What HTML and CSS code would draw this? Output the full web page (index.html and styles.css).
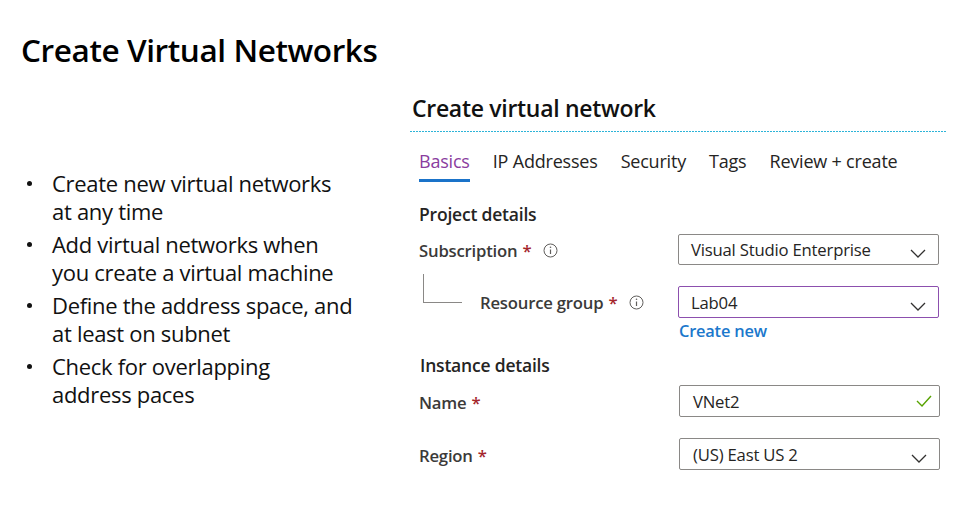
FILE: index.html
```html
<!DOCTYPE html>
<html>
<head>
<meta charset="utf-8">
<link rel="stylesheet" href="styles.css">
</head>
<body>
<div class="slide">
  <h1 class="title">Create Virtual Networks</h1>
  <div class="content">
    <ul class="bullets">
      <li>Create new virtual networks<br>at any time</li>
      <li>Add virtual networks when<br>you create a virtual machine</li>
      <li>Define the address space, and<br>at least on subnet</li>
      <li>Check for overlapping<br>address paces</li>
    </ul>
    <div class="panel">
      <h2 class="panel-title">Create virtual network</h2>
      <div class="tabs">
        <span class="tab active">Basics</span>
        <span class="tab">IP Addresses</span>
        <span class="tab">Security</span>
        <span class="tab">Tags</span>
        <span class="tab">Review + create</span>
      </div>
      <div class="section">Project details</div>
      <div class="row row-sub">
        <div class="label">Subscription <span class="req">*</span>
          <svg class="info" width="15" height="15" viewBox="0 0 15 15"><circle cx="7.5" cy="7.5" r="6.5" fill="none" stroke="#605e5c" stroke-width="1"/><line x1="7.5" y1="6.5" x2="7.5" y2="11" stroke="#605e5c" stroke-width="1.2"/><circle cx="7.5" cy="4.3" r="0.8" fill="#605e5c"/></svg>
        </div>
        <div class="control">Visual Studio Enterprise
          <svg class="chev" width="16" height="9" viewBox="0 0 16 9"><polyline points="1,1 8,8 15,1" fill="none" stroke="#323130" stroke-width="1.3"/></svg>
        </div>
      </div>
      <div class="row row-rg">
        <div class="label sub-label"><span class="connector"></span>Resource group <span class="req">*</span>
          <svg class="info" width="15" height="15" viewBox="0 0 15 15"><circle cx="7.5" cy="7.5" r="6.5" fill="none" stroke="#605e5c" stroke-width="1"/><line x1="7.5" y1="6.5" x2="7.5" y2="11" stroke="#605e5c" stroke-width="1.2"/><circle cx="7.5" cy="4.3" r="0.8" fill="#605e5c"/></svg>
        </div>
        <div class="control focused">Lab04
          <svg class="chev" width="16" height="9" viewBox="0 0 16 9"><polyline points="1,1 8,8 15,1" fill="none" stroke="#323130" stroke-width="1.3"/></svg>
        </div>
      </div>
      <div class="row row-link">
        <div class="label"></div>
        <a class="link">Create new</a>
      </div>
      <div class="section section-2">Instance details</div>
      <div class="row row-name">
        <div class="label">Name <span class="req">*</span></div>
        <div class="control">VNet2
          <svg class="check" width="16" height="12" viewBox="0 0 16 12"><polyline points="1,6 6,11 15,1" fill="none" stroke="#57a300" stroke-width="1.4"/></svg>
        </div>
      </div>
      <div class="row row-region">
        <div class="label">Region <span class="req">*</span></div>
        <div class="control">(US) East US 2
          <svg class="chev" width="16" height="9" viewBox="0 0 16 9"><polyline points="1,1 8,8 15,1" fill="none" stroke="#323130" stroke-width="1.3"/></svg>
        </div>
      </div>
    </div>
  </div>
</div>
</body>
</html>
```

FILE: styles.css
```css
* { box-sizing: border-box; }
html, body {
  margin: 0;
  padding: 0;
  background: #ffffff;
}
body {
  width: 963px;
  height: 520px;
  overflow: hidden;
  font-family: "Open Sans", "Noto Sans", sans-serif;
  color: #000;
}
.slide {
  padding: 26px 0 0 21px;
}
.title {
  margin: 0;
  font-size: 31.5px;
  font-weight: 600;
  line-height: 48px;
  letter-spacing: -0.4px;
  color: #000;
}
.content {
  display: flex;
  align-items: flex-start;
}
.bullets {
  list-style: none;
  margin: 95px 0 0 0;
  padding: 0 0 0 31px;
  width: 389px;
  flex: none;
  font-size: 22px;
  line-height: 28px;
  letter-spacing: -0.3px;
  color: #111;
}
.bullets li {
  position: relative;
  margin-bottom: 5px;
  white-space: nowrap;
}
.bullets li::before {
  content: "";
  position: absolute;
  left: -25px;
  top: 12px;
  width: 5px;
  height: 5px;
  border-radius: 50%;
  background: #111;
}
.panel {
  width: 536px;
  margin-top: 16px;
  display: flex;
  flex-direction: column;
}
.panel-title {
  margin: 0;
  padding: 0 0 5px 2px;
  font-size: 23px;
  font-weight: 600;
  line-height: 36px;
  letter-spacing: -0.3px;
  color: #111;
}
.panel-title::after {
  content: "";
  display: block;
  height: 1px;
  margin: 5px 0 0 -2px;
  background: repeating-linear-gradient(to right, #2db4d8 0 2px, #ffffff 2px 3px);
}
.tabs {
  display: flex;
  gap: 23px;
  padding-left: 9px;
  margin-top: 11px;
  font-size: 18px;
  line-height: 26px;
  color: #252423;
  letter-spacing: -0.2px;
}
.tab {
  padding-bottom: 5px;
  border-bottom: 3px solid transparent;
}
.tab.active {
  color: #8a3d9e;
  border-bottom-color: #1a73c9;
}
.section {
  margin-top: 21px;
  padding-left: 9px;
  font-size: 17.5px;
  font-weight: 600;
  line-height: 22px;
  color: #252423;
  letter-spacing: -0.2px;
}
.section-2 {
  margin-top: 10px;
  padding-left: 10px;
}
.row {
  display: flex;
  align-items: center;
  padding-left: 9px;
}
.row-sub { margin-top: 9px; }
.row-rg { margin-top: 21px; }
.row-name { margin-top: 9px; }
.row-region { margin-top: 21px; }
.label {
  width: 259px;
  flex: none;
  display: flex;
  align-items: center;
  padding-top: 2px;
  font-size: 16.7px;
  font-weight: 600;
  color: #3b3a39;
  letter-spacing: -0.2px;
  white-space: nowrap;
}
.req {
  color: #a4262c;
  margin-left: 5px;
}
.info {
  margin-left: 12px;
}
.sub-label {
  align-self: stretch;
  padding-top: 0;
}
.connector {
  align-self: flex-start;
  flex: none;
  width: 39px;
  height: 29px;
  margin: -12px 18px 0 4px;
  border-left: 1px solid #8a8886;
  border-bottom: 1px solid #8a8886;
}
.control {
  width: 261px;
  height: 31px;
  border: 1px solid #8a8886;
  border-radius: 2px;
  padding: 0 12px 0 12px;
  display: flex;
  align-items: center;
  font-size: 16.7px;
  color: #252423;
  letter-spacing: -0.2px;
}
.control.focused {
  border-color: #8c4fae;
  height: 32px;
}
.row-name .control, .row-region .control {
  margin-left: 1px;
  height: 32px;
  padding-left: 13px;
}
.chev {
  margin-left: auto;
  margin-top: 8px;
}
.check {
  margin-left: auto;
  margin-right: -5px;
}
.row-link {
  height: 26px;
}
.link {
  font-size: 16.4px;
  font-weight: 600;
  color: #1b78cc;
  line-height: 26px;
  margin-left: 1px;
  letter-spacing: -0.2px;
}
```
